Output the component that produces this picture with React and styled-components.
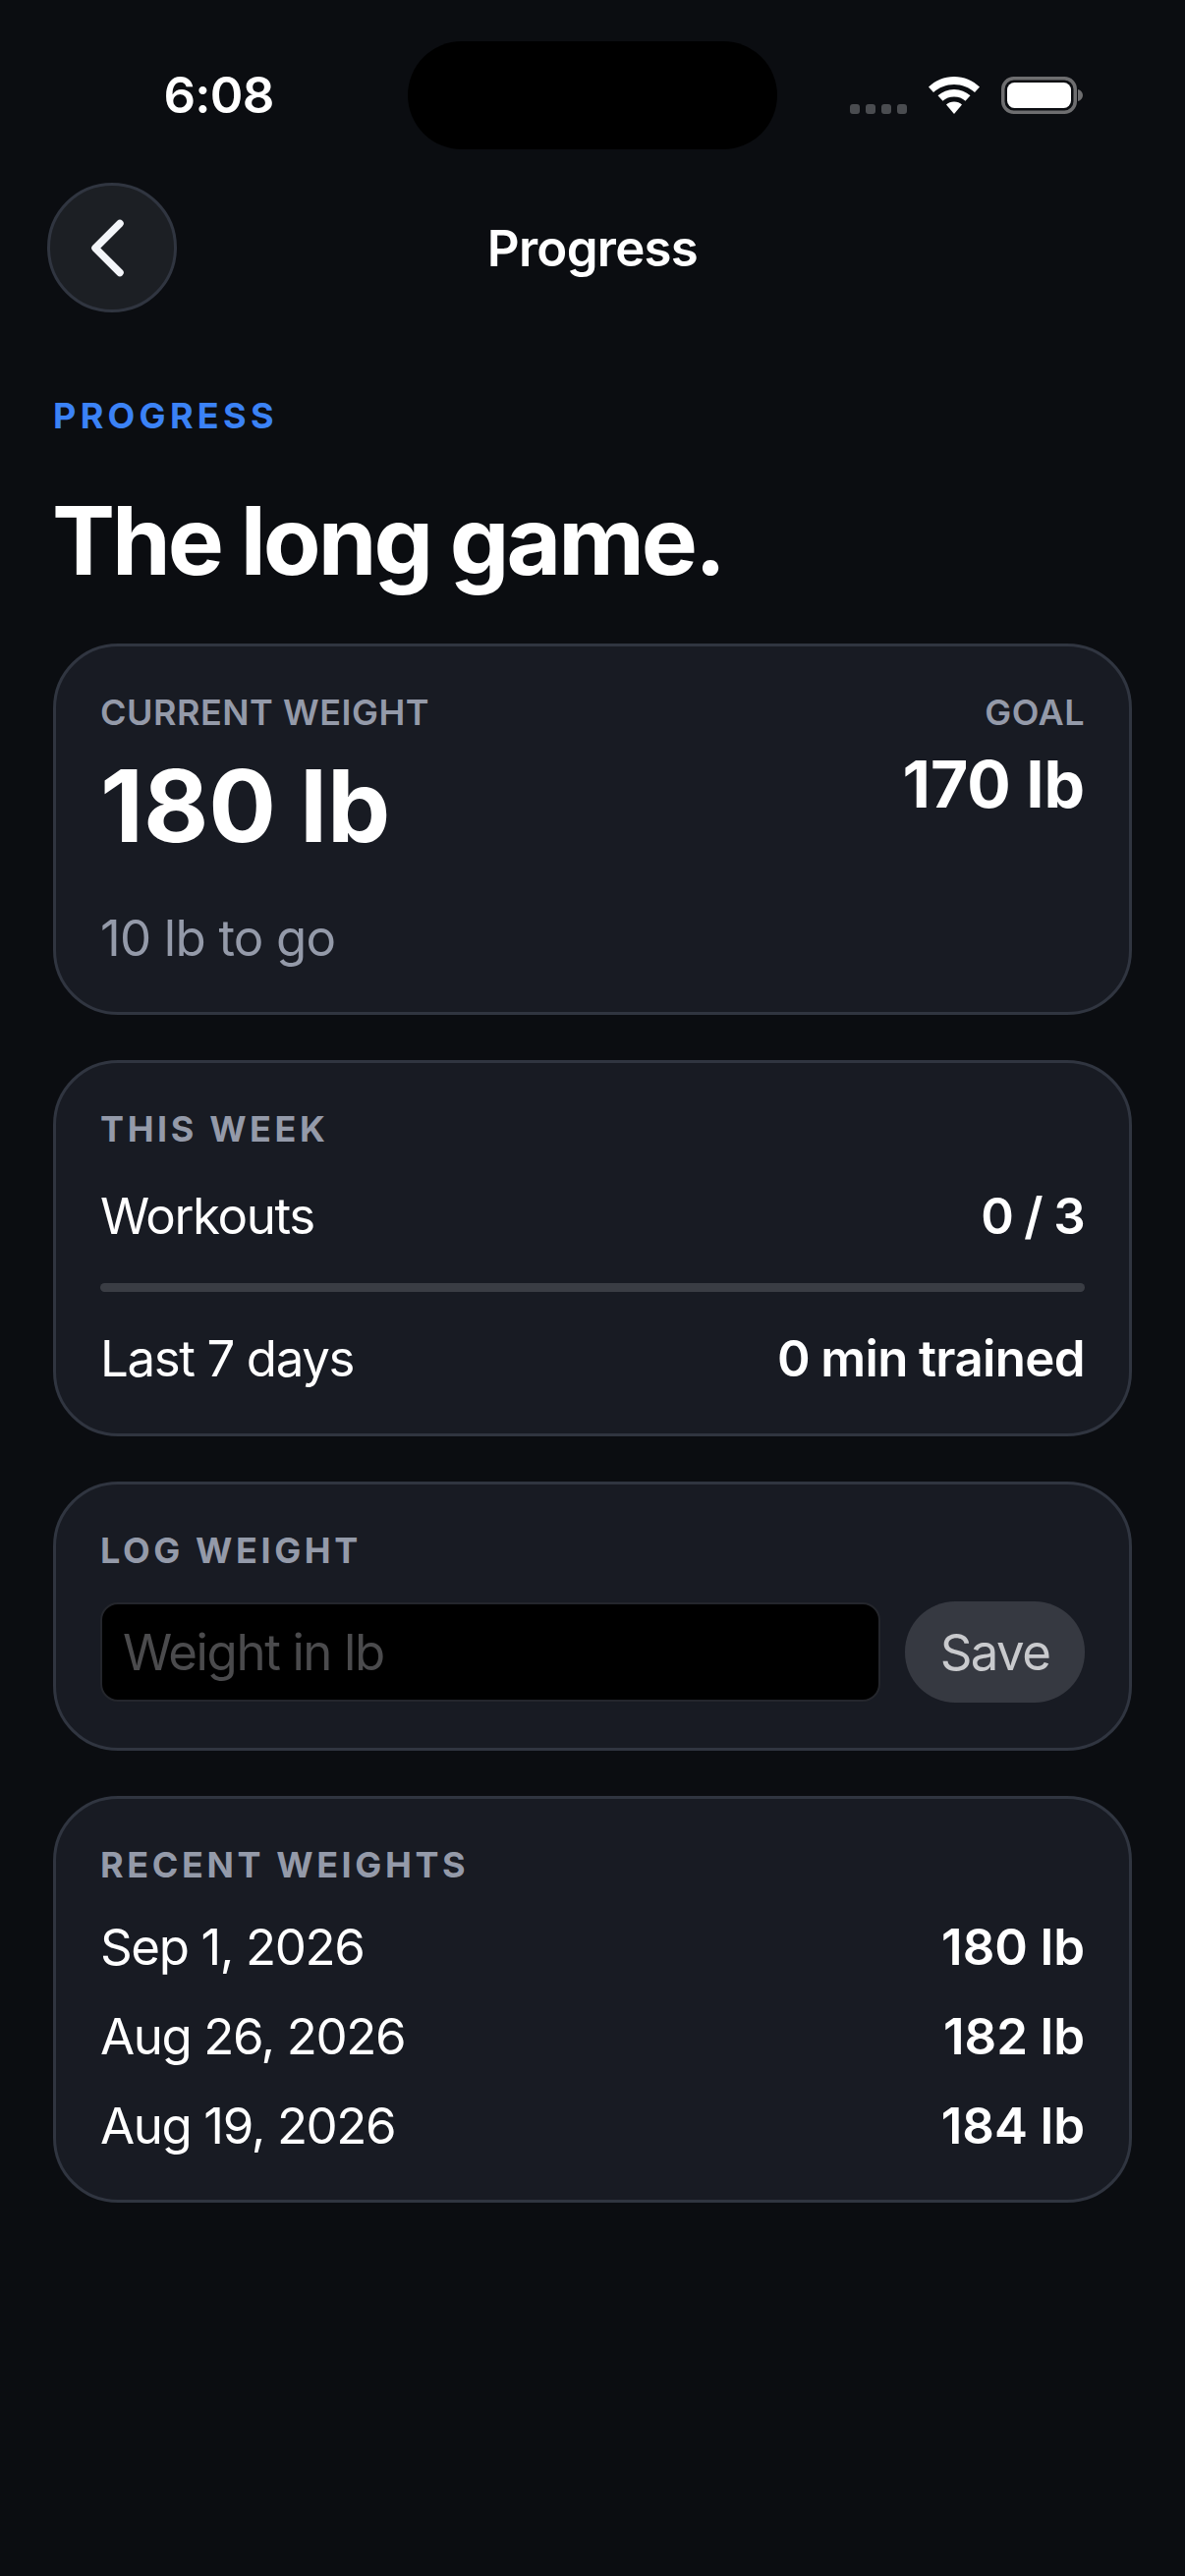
import React from "react"
import styled, { createGlobalStyle } from "styled-components"

const GlobalStyle = createGlobalStyle`
    html, body {
        margin: 0;
        padding: 0;
        background: #0b0d11;
    }

    * {
        box-sizing: border-box;
    }
`

const Screen = styled.div`
    width: 1206px;
    height: 2622px;
    overflow: hidden;
    background: #0b0d11;
    color: #fff;
    font-family: Inter, "Liberation Sans", sans-serif;
`

const StatusBar = styled.div`
    display: grid;
    grid-template-columns: 415px 376px 1fr;
    align-items: center;
    height: 110px;
    margin-top: 42px;
`

const Time = styled.div`
    text-align: center;
    padding-left: 30px;
    font-size: 51px;
    font-weight: 600;
    line-height: 110px;
    letter-spacing: -0.8px;
`

const Island = styled.div`
    height: 110px;
    border-radius: 55px;
    background: #000;
`

const StatusIcons = styled.div`
    display: flex;
    align-items: flex-end;
    padding-left: 74px;
    gap: 22px;
`

const Dots = styled.div`
    display: flex;
    gap: 6px;
`

const Dot = styled.span`
    width: 10px;
    height: 10px;
    border-radius: 3px;
    background: #4a4c50;
`

const NavBar = styled.div`
    display: grid;
    grid-template-columns: 132px 1fr 132px;
    align-items: center;
    margin: 34px 48px 0;
`

const BackButton = styled.div`
    display: flex;
    align-items: center;
    justify-content: center;
    width: 132px;
    height: 132px;
    border-radius: 50%;
    background: #1c1f24;
    border: 3px solid #303540;
`

const NavTitle = styled.div`
    text-align: center;
    font-size: 51px;
    font-weight: 600;
    letter-spacing: -0.75px;
`

const Content = styled.div`
    display: flex;
    flex-direction: column;
    padding: 0 54px;
`

const Eyebrow = styled.div`
    margin-top: 83px;
    color: #3b82f6;
    font-size: 36px;
    line-height: 44px;
    font-weight: 700;
    letter-spacing: 4.3px;
`

const Heading = styled.h1`
    margin: 47px 0 47px -1px;
    font-size: 96px;
    line-height: 116px;
    font-weight: 700;
    letter-spacing: -3px;
`

const Stack = styled.div`
    display: flex;
    flex-direction: column;
    gap: 46px;
`

const Card = styled.section`
    display: flex;
    flex-direction: column;
    padding: 45px;
    height: ${(p) => p.$height}px;
    border-radius: 66px;
    background: #181b23;
    border: 3px solid #303540;
`

const Row = styled.div`
    display: flex;
    justify-content: space-between;
    align-items: ${(p) => p.$align || "center"};
    margin-top: ${(p) => p.$top || 0}px;
`

const Column = styled.div`
    display: flex;
    flex-direction: column;
    align-items: ${(p) => (p.$end ? "flex-end" : "flex-start")};
`

const StatLabel = styled.div`
    color: #949aa9;
    font-size: 36px;
    line-height: 44px;
    font-weight: 600;
    letter-spacing: 0.5px;
`

const BigValue = styled.div`
    margin-top: 11px;
    font-size: 102px;
    line-height: 124px;
    font-weight: 700;
`

const GoalValue = styled.div`
    margin-top: 11px;
    font-size: 66px;
    line-height: 80px;
    font-weight: 700;
`

const Muted = styled.div`
    margin-top: 44px;
    color: #949aa9;
    font-size: 51px;
    line-height: 58px;
    letter-spacing: -0.8px;
`

const SectionLabel = styled.div`
    color: #949aa9;
    font-size: 36px;
    line-height: 44px;
    font-weight: 700;
    letter-spacing: 3.6px;
`

const RowLabel = styled.div`
    font-size: 51px;
    line-height: 62px;
    font-weight: 400;
    letter-spacing: -1.4px;
`

const RowValue = styled.div`
    font-size: 51px;
    line-height: 62px;
    font-weight: 600;
    letter-spacing: ${(p) => (p.$tight ? "-0.65px" : "0")};
    word-spacing: ${(p) => (p.$tight ? "-1px" : "0")};
`

const Track = styled.div`
    height: 12px;
    margin-top: 37px;
    border-radius: 6px;
    background: #3a3d44;
`

const LogRow = styled.div`
    display: flex;
    align-items: center;
    gap: 25px;
    margin-top: 30px;
`

const WeightInput = styled.input`
    flex: 1;
    min-width: 0;
    height: 101px;
    padding: 0 21px;
    border-radius: 18px;
    border: 2px solid #24262c;
    background: #000;
    color: #fff;
    outline: none;
    font-family: inherit;
    font-size: 51px;
    letter-spacing: -1.4px;

    &::placeholder {
        color: #4b4b4d;
        opacity: 1;
    }
`

const SaveButton = styled.button`
    width: 183px;
    height: 103px;
    padding: 0;
    border: 0;
    border-radius: 51px;
    background: #363941;
    color: #c9cacd;
    font-family: inherit;
    font-size: 51px;
    font-weight: 400;
    letter-spacing: -1.6px;
`

const weights = [
    { date: "Sep 1, 2026", value: "180 lb" },
    { date: "Aug 26, 2026", value: "182 lb" },
    { date: "Aug 19, 2026", value: "184 lb" },
]

const App = () => {
    return (
        <Screen>
            <GlobalStyle />
            <StatusBar>
                <Time>6:08</Time>
                <Island />
                <StatusIcons>
                    <Dots>
                        <Dot />
                        <Dot />
                        <Dot />
                        <Dot />
                    </Dots>
                    <svg width="52" height="38" viewBox="0 0 52 38" style={{ display: "block" }}>
                        <path fill="#fff" d="M26 0C16 0 7 4 0 10.500L5 16C10.500 11 18 8 26 8s15.500 3 21 8l5-5.500C45 4 36 0 26 0Z" />
                        <path fill="#fff" d="M26 13c-6.500 0-12 2.300-16.500 6.300l5 5.500C17.500 22 21.500 20.500 26 20.500s8.500 1.500 11.500 4.300l5-5.500C38 15.300 32.500 13 26 13Z" />
                        <path fill="#fff" d="M26 25.500c-3.200 0-6 1.100-8 3L26 38l8-9.500c-2-1.900-4.800-3-8-3Z" />
                    </svg>
                    <svg width="83" height="38" viewBox="0 0 83 38" style={{ display: "block" }}>
                        <rect x="1.750" y="1.750" width="73.500" height="34.500" rx="11" fill="none" stroke="#6e6e70" strokeWidth="3.500" />
                        <rect x="6" y="6" width="65" height="26" rx="7.500" fill="#fff" />
                        <path fill="#6e6e70" d="M78 13c3 .8 5 3 5 6s-2 5.200-5 6Z" />
                    </svg>
                </StatusIcons>
            </StatusBar>

            <NavBar>
                <BackButton>
                    <svg width="48" height="64" viewBox="0 0 48 64" fill="none">
                        <path d="M32 7.500 7 32.500l25 25" stroke="#f3f5f9" strokeWidth="7.500" strokeLinecap="round" strokeLinejoin="round" />
                    </svg>
                </BackButton>
                <NavTitle>Progress</NavTitle>
            </NavBar>

            <Content>
                <Eyebrow>PROGRESS</Eyebrow>
                <Heading>The long game.</Heading>
                <Stack>
                    <Card $height={378}>
                        <Row $align="flex-start">
                            <Column>
                                <StatLabel>CURRENT WEIGHT</StatLabel>
                                <BigValue>180 lb</BigValue>
                            </Column>
                            <Column $end>
                                <StatLabel>GOAL</StatLabel>
                                <GoalValue>170 lb</GoalValue>
                            </Column>
                        </Row>
                        <Muted>10 lb to go</Muted>
                    </Card>

                    <Card $height={383}>
                        <SectionLabel>THIS WEEK</SectionLabel>
                        <Row $top={36}>
                            <RowLabel>Workouts</RowLabel>
                            <RowValue $tight>0 / 3</RowValue>
                        </Row>
                        <Track />
                        <Row $top={37}>
                            <RowLabel>Last 7 days</RowLabel>
                            <RowValue $tight>0 min trained</RowValue>
                        </Row>
                    </Card>

                    <Card $height={274}>
                        <SectionLabel>LOG WEIGHT</SectionLabel>
                        <LogRow>
                            <WeightInput placeholder="Weight in lb" />
                            <SaveButton>Save</SaveButton>
                        </LogRow>
                    </Card>

                    <Card $height={414}>
                        <SectionLabel>RECENT WEIGHTS</SectionLabel>
                        {weights.map((w, i) => (
                            <Row key={w.date} $top={i === 0 ? 31 : 29}>
                                <RowLabel>{w.date}</RowLabel>
                                <RowValue>{w.value}</RowValue>
                            </Row>
                        ))}
                    </Card>
                </Stack>
            </Content>
        </Screen>
    )
}

export default App
